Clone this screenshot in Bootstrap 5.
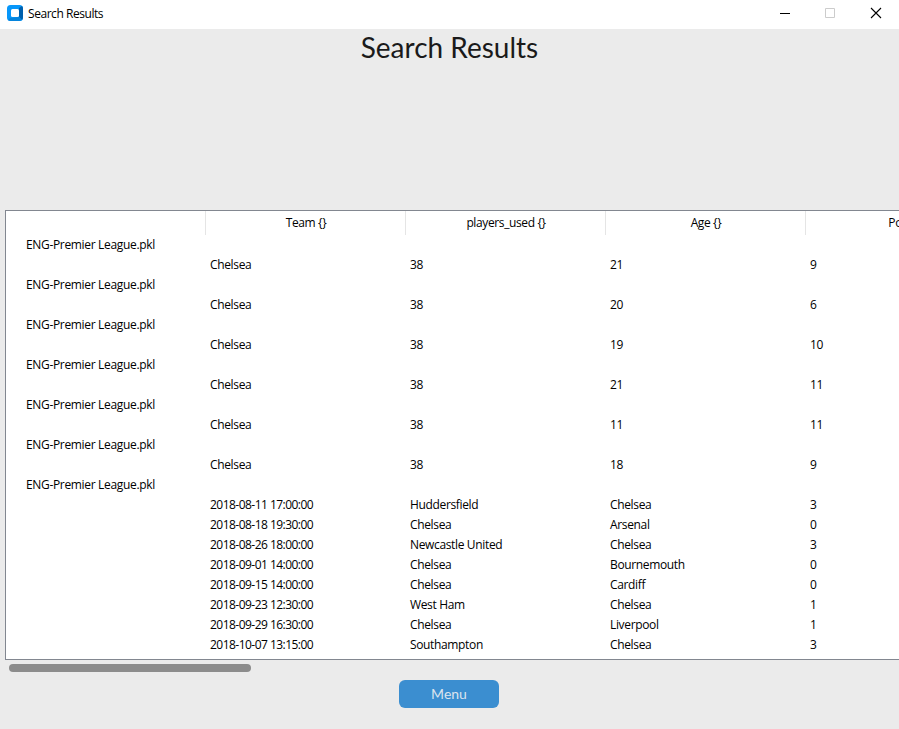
<!DOCTYPE html>
<html lang="en">
<head>
<meta charset="utf-8">
<meta name="viewport" content="width=device-width, initial-scale=1">
<title>Search Results</title>
<link href="https://cdn.jsdelivr.net/npm/bootstrap@5.3.0/dist/css/bootstrap.min.css" rel="stylesheet">
<style>
body{background:#ebebeb;color:#000;font:12px/20px "Open Sans","Noto Sans",sans-serif;height:729px}
.titlebar{height:29px}
.app-icon{margin:5px 0 0 7px}
.caption{margin-left:5px;padding-top:5px;letter-spacing:-.45px;line-height:18px}
.winbtns{margin-right:1px}
.winbtn{width:45px;height:27px}
.heading{font:28px/36px Lato,sans-serif;color:#1a1a1a;height:181px}
.heading span{letter-spacing:0}
.tree{height:450px;margin-left:5px;border:1px solid #828790;border-right:0}
.grid-table{width:1000px;table-layout:fixed;border-collapse:separate;border-spacing:0}
.grid-table th{height:24px;padding:0 0 1px 1px;font-weight:400;text-align:center;border-right:1px solid #e5e5e5;letter-spacing:-.38px;line-height:20px}
.grid-table td{height:20px;padding:0 0 0 4px;white-space:nowrap;letter-spacing:-.35px}
.grid-table td:first-child{padding-left:20px;letter-spacing:-.33px}
.grid-table .stamp{letter-spacing:-.53px}
.scroll-thumb{width:242px;height:8px;margin:4px 0 0 9px;border-radius:4px;background:#8c8c8c}
.menu-btn{width:100px;height:28px;margin:8px 1px 0 0;border-radius:6px;background:#3b8ed0;color:#dce4ee;font:14px/28px Lato,sans-serif;letter-spacing:0}
.menu-btn:hover{background:#36719f;color:#dce4ee}
</style>
</head>
<body class="overflow-hidden d-flex flex-column">
<header class="titlebar bg-white d-flex align-items-start flex-shrink-0">
<svg class="app-icon flex-shrink-0" width="16" height="16" viewBox="0 0 16 16" aria-hidden="true"><rect width="16" height="16" rx="3.5" fill="#0797fa"/><path d="M12 3 15 1Q16 2 16 4V12Q16 14 15 15L12 12Z" fill="#0060ad"/><path d="M3 13 12 12 15 15Q14 16 12 16H4Q2 16 1 15Z" fill="#0584dc"/><rect x="4" y="4" width="8" height="8" rx="1.5" fill="#fff"/></svg>
<span class="caption">Search Results</span>
<div class="winbtns ms-auto d-flex">
<button class="winbtn btn p-0 border-0 rounded-0 d-flex" aria-label="Minimize"><svg width="45" height="27"><path d="M17 13.5H27" stroke="#000"/></svg></button>
<button class="winbtn btn p-0 border-0 rounded-0 d-flex" aria-label="Maximize"><svg width="45" height="27"><path d="M17.5 8.5h9v9h-9z" fill="none" stroke="#ccc"/></svg></button>
<button class="winbtn btn p-0 border-0 rounded-0 d-flex" aria-label="Close"><svg width="45" height="27"><path d="M18 8l10 10M28 8L18 18" stroke="#000" stroke-width="1.1"/></svg></button>
</div>
</header>
<h1 class="heading text-center m-0 flex-shrink-0"><span>Search Results</span></h1>
<main class="tree bg-white overflow-hidden flex-shrink-0">
<table class="grid-table">
<thead><tr><th></th><th>Team {}</th><th>players_used {}</th><th>Age {}</th><th>Poss {}</th></tr></thead>
<tbody>
<tr><td>ENG-Premier League.pkl</td><td></td><td></td><td></td><td></td></tr>
<tr><td></td><td>Chelsea</td><td>38</td><td>21</td><td>9</td></tr>
<tr><td>ENG-Premier League.pkl</td><td></td><td></td><td></td><td></td></tr>
<tr><td></td><td>Chelsea</td><td>38</td><td>20</td><td>6</td></tr>
<tr><td>ENG-Premier League.pkl</td><td></td><td></td><td></td><td></td></tr>
<tr><td></td><td>Chelsea</td><td>38</td><td>19</td><td>10</td></tr>
<tr><td>ENG-Premier League.pkl</td><td></td><td></td><td></td><td></td></tr>
<tr><td></td><td>Chelsea</td><td>38</td><td>21</td><td>11</td></tr>
<tr><td>ENG-Premier League.pkl</td><td></td><td></td><td></td><td></td></tr>
<tr><td></td><td>Chelsea</td><td>38</td><td>11</td><td>11</td></tr>
<tr><td>ENG-Premier League.pkl</td><td></td><td></td><td></td><td></td></tr>
<tr><td></td><td>Chelsea</td><td>38</td><td>18</td><td>9</td></tr>
<tr><td>ENG-Premier League.pkl</td><td></td><td></td><td></td><td></td></tr>
<tr><td></td><td class="stamp">2018-08-11 17:00:00</td><td>Huddersfield</td><td>Chelsea</td><td>3</td></tr>
<tr><td></td><td class="stamp">2018-08-18 19:30:00</td><td>Chelsea</td><td>Arsenal</td><td>0</td></tr>
<tr><td></td><td class="stamp">2018-08-26 18:00:00</td><td>Newcastle United</td><td>Chelsea</td><td>3</td></tr>
<tr><td></td><td class="stamp">2018-09-01 14:00:00</td><td>Chelsea</td><td>Bournemouth</td><td>0</td></tr>
<tr><td></td><td class="stamp">2018-09-15 14:00:00</td><td>Chelsea</td><td>Cardiff</td><td>0</td></tr>
<tr><td></td><td class="stamp">2018-09-23 12:30:00</td><td>West Ham</td><td>Chelsea</td><td>1</td></tr>
<tr><td></td><td class="stamp">2018-09-29 16:30:00</td><td>Chelsea</td><td>Liverpool</td><td>1</td></tr>
<tr><td></td><td class="stamp">2018-10-07 13:15:00</td><td>Southampton</td><td>Chelsea</td><td>3</td></tr>
</tbody>
</table>
</main>
<div class="scroll-thumb flex-shrink-0"></div>
<button class="menu-btn btn border-0 p-0 align-self-center flex-shrink-0">Menu</button>
<script src="https://cdn.jsdelivr.net/npm/bootstrap@5.3.0/dist/js/bootstrap.bundle.min.js"></script>
</body>
</html>
